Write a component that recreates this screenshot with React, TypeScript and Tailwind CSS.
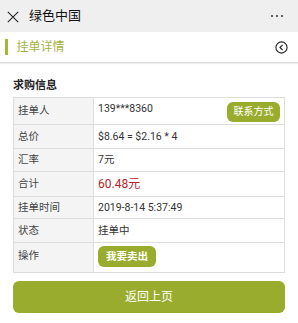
import React from 'react';

const rows: { label: string; value: React.ReactNode; h: string }[] = [
  {
    label: '挂单人',
    h: 'h-[27px]',
    value: (
      <div className="flex justify-between items-start h-full pt-[5px] pr-[4px]">
        <span className="leading-[12px]">139***8360</span>
        <button className="-mt-[1px] h-[20px] w-[53px] rounded-[6px] bg-[#9aac2d] text-white text-[10px] leading-[20px]">
          联系方式
        </button>
      </div>
    ),
  },
  { label: '总价', h: 'h-[24px]', value: <span>$8.64 = $2.16 * 4</span> },
  { label: '汇率', h: 'h-[23px]', value: <span>7元</span> },
  { label: '合计', h: 'h-[25px]', value: <span className="text-[12px] text-[#b2262b]">60.48元</span> },
  { label: '挂单时间', h: 'h-[22px]', value: <span>2019-8-14 5:37:49</span> },
  { label: '状态', h: 'h-[24px]', value: <span>挂单中</span> },
  {
    label: '操作',
    h: 'h-[29px]',
    value: (
      <div className="pt-[3px]">
        <button className="h-[21px] w-[58px] rounded-[6px] bg-[#9aac2d] text-white text-[10.5px] font-bold leading-[21px]">
          我要卖出
        </button>
      </div>
    ),
  },
];

export default function App() {
  return (
    <div className="w-[298px] h-[323px] bg-white text-[#333] font-['Roboto','Noto_Sans_CJK_SC',sans-serif] overflow-hidden">
      {/* title bar */}
      <div className="h-[32px] bg-[#efefef] flex items-center justify-between pl-[7px] pr-[15px]">
        <div className="flex items-center gap-[10px]">
          <svg width="12" height="12" viewBox="0 0 12 12" className="mt-[1px]">
            <path d="M0.8 0.8 L11.2 11.2 M11.2 0.8 L0.8 11.2" stroke="#222" strokeWidth="1.05" fill="none" />
          </svg>
          <span className="text-[13px] text-[#111]">绿色中国</span>
        </div>
        <div className="flex gap-[2.5px] items-center">
          <span className="w-[2.5px] h-[2.5px] rounded-full bg-[#333]" />
          <span className="w-[2.5px] h-[2.5px] rounded-full bg-[#333]" />
          <span className="w-[2.5px] h-[2.5px] rounded-full bg-[#333]" />
        </div>
      </div>

      {/* page header */}
      <div className="h-[31px] flex items-center justify-between pl-[5px] pr-[10px] border-b border-[#dcdcdc] shadow-[0_1px_1px_rgba(0,0,0,0.06)]">
        <div className="flex items-center gap-[9px]">
          <span className="w-[2.5px] h-[16px] bg-[#a4b53c]" />
          <span className="text-[12px] text-[#a3b344]">挂单详情</span>
        </div>
        <svg width="13" height="13" viewBox="0 0 13 13">
          <circle cx="6.5" cy="6.5" r="5.6" stroke="#222" strokeWidth="1.1" fill="none" />
          <path d="M7.6 3.9 L5 6.5 L7.6 9.1" stroke="#222" strokeWidth="1.2" fill="none" />
        </svg>
      </div>

      <div className="px-[13px]">
        <div className="mt-[16px] text-[11px] font-bold text-[#222] leading-[14px]">求购信息</div>

        <div className="mt-[4px] border border-[#dddddd] text-[10.5px]">
          {rows.map((r, i) => (
            <div key={r.label} className={`flex ${r.h} ${i < rows.length - 1 ? 'border-b border-[#dddddd]' : ''}`}>
              <div
                className={`w-[80px] shrink-0 bg-[#f4f4f4] border-r border-[#dddddd] pl-[4px] flex text-[#444] ${
                  i === rows.length - 1 ? 'items-start pt-[5px]' : 'items-center'
                }`}
              >
                {r.label}
              </div>
              <div className={`flex-1 pl-[4px] ${i === 0 || i === rows.length - 1 ? '' : 'flex items-center'}`}>
                {r.value}
              </div>
            </div>
          ))}
        </div>

        <button className="mt-[8px] w-full h-[32px] rounded-[6px] bg-[#9aac2d] text-white text-[12px]">
          返回上页
        </button>
      </div>
    </div>
  );
}
